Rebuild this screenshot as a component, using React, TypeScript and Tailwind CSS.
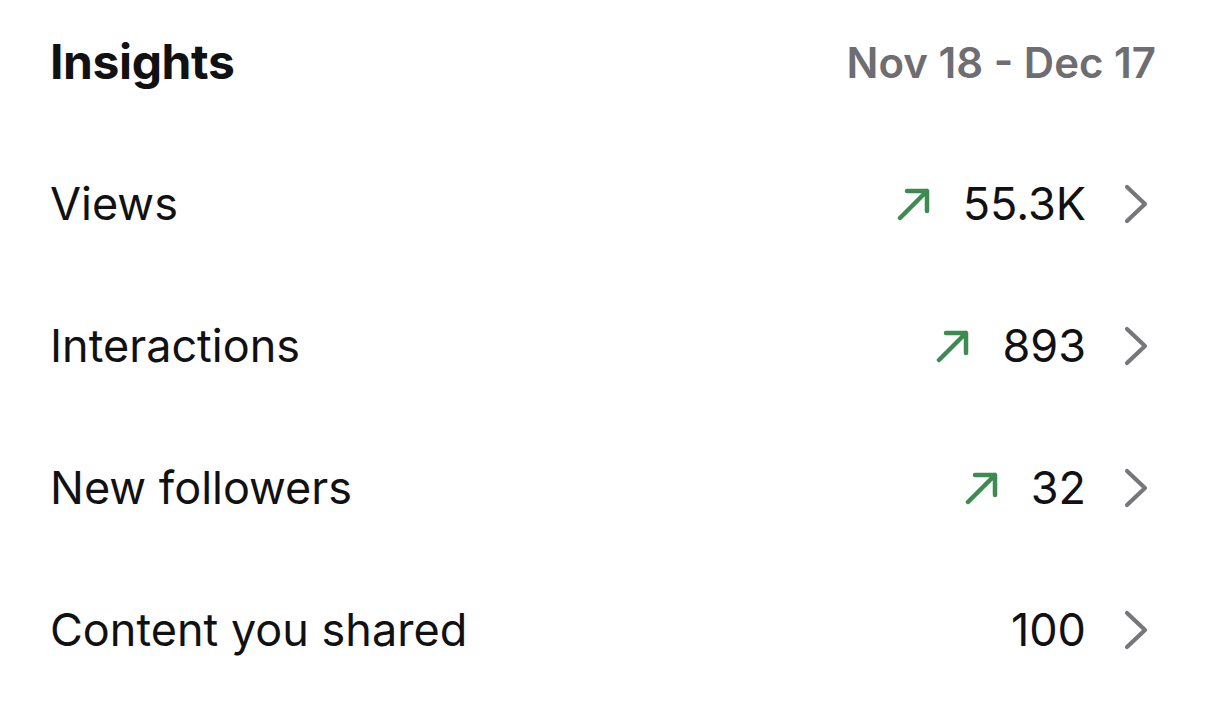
import React from 'react'

interface Row {
  label: string
  value: string
  up?: boolean
}

const rows: Row[] = [
  { label: 'Views', value: '55.3K', up: true },
  { label: 'Interactions', value: '893', up: true },
  { label: 'New followers', value: '32', up: true },
  { label: 'Content you shared', value: '100' },
]

const UpArrow = () => (
  <svg width="34" height="34" viewBox="0 0 34 34" fill="none" className="shrink-0">
    <path d="M3 31 L30 4 M10 4 H30 V24" stroke="#3e8a50" strokeWidth="4.5" strokeLinecap="round" strokeLinejoin="round" />
  </svg>
)

const Chevron = () => (
  <svg width="24" height="40" viewBox="0 0 24 40" fill="none" className="shrink-0">
    <path d="M3 3 L21 20 L3 37" stroke="#77777b" strokeWidth="4.2" strokeLinecap="round" strokeLinejoin="round" />
  </svg>
)

const App: React.FC = () => {
  return (
    <div className="w-[1206px] h-[722px] bg-white px-[50px] text-[#111113]" style={{ fontFamily: 'Inter, "Noto Sans", sans-serif' }}>
      <div className="h-[124px] flex items-center justify-between">
        <h1 className="text-[48px] font-bold tracking-[-0.4px]">Insights</h1>
        <span className="text-[42px] font-semibold text-[#6d6d72]">Nov 18 - Dec 17</span>
      </div>
      <div className="mt-[9px]">
        {rows.map((r) => (
          <div key={r.label} className="h-[142px] flex items-center justify-between">
            <span className="text-[45px]">{r.label}</span>
            <div className="flex items-center">
              {r.up && <div className="mr-[32px]"><UpArrow /></div>}
              <span className="text-[45px]">{r.value}</span>
              <div className="ml-[38px] mr-[8px]"><Chevron /></div>
            </div>
          </div>
        ))}
      </div>
    </div>
  )
}

export default App
